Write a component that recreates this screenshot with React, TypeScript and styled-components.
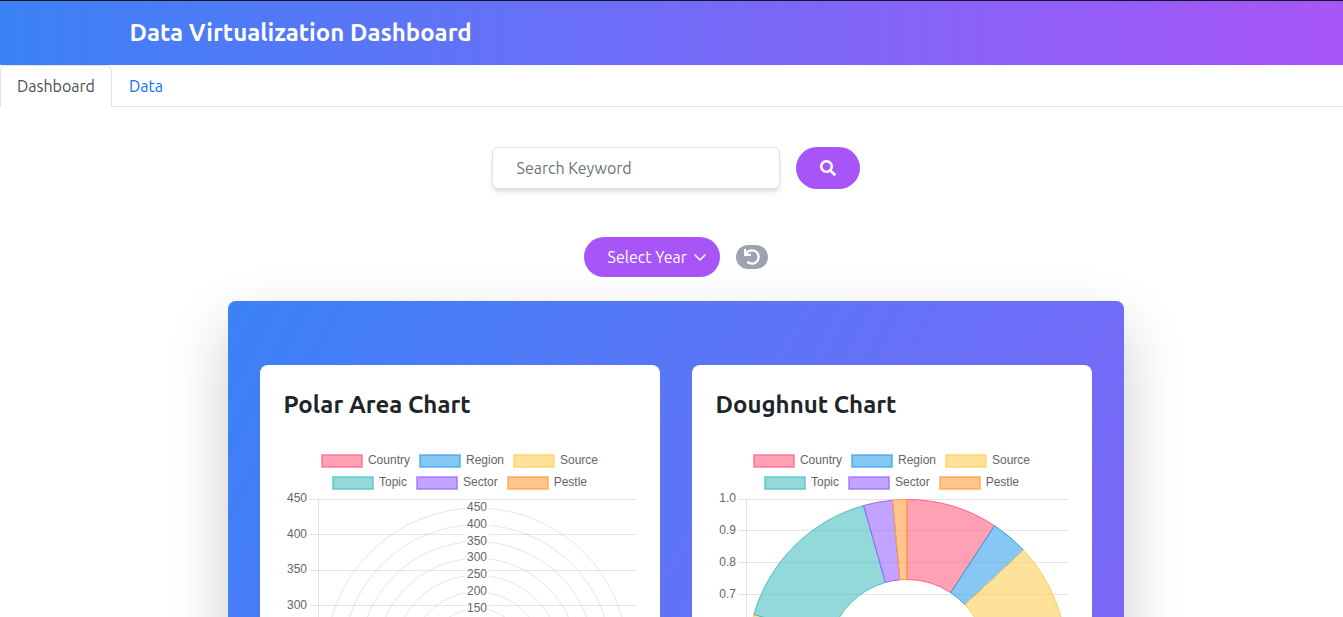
import React from "react";
import styled, { createGlobalStyle } from "styled-components";
import { FaSearch, FaUndo } from "react-icons/fa";

const GlobalStyle = createGlobalStyle`
  *, *::before, *::after { box-sizing: border-box; }
  html { scrollbar-width: none; }
  body {
    margin: 0;
    background: #fff;
    color: #212529;
    font-family: Ubuntu, "Open Sans", sans-serif;
    font-size: 16px;
    line-height: 24px;
  }
  button, input, select { font: inherit; }
`;

const Header = styled.header`
  border-top: 1px solid #14161c;
  background: linear-gradient(to right, #3b82f6, #a855f7);
`;

const HeaderInner = styled.div`
  max-width: 1140px;
  margin: 0 auto;
  padding: 16px 28px;
`;

const PageTitle = styled.h1`
  margin: 0;
  color: #fff;
  font-size: 24px;
  line-height: 32px;
  font-weight: 600;
`;

const Tabs = styled.nav`
  display: flex;
  border-bottom: 1px solid #dee2e6;
`;

const Tab = styled.a<{ $active?: boolean }>`
  margin-bottom: -1px;
  padding: 8px 16px;
  border: 1px solid;
  border-color: ${(p) => (p.$active ? "#dee2e6 #dee2e6 #fff" : "transparent")};
  border-radius: 6px 6px 0 0;
  color: ${(p) => (p.$active ? "#495057" : "#0d6efd")};
  text-decoration: none;
`;

const Main = styled.main`
  display: flex;
  flex-direction: column;
  align-items: center;
  padding: 40px 0 40px 8px;
`;

const SearchForm = styled.form`
  display: flex;
  gap: 16px;
  margin-bottom: 48px;
`;

const SearchInput = styled.input`
  width: 288px;
  height: 42px;
  padding: 8px 24px;
  border: 1px solid #dee2e6;
  border-radius: 6px;
  background: #fff;
  color: #212529;
  box-shadow: 0 4px 6px -1px rgba(0, 0, 0, 0.1), 0 2px 4px -2px rgba(0, 0, 0, 0.1);
  &::placeholder { color: #6c757d; opacity: 1; }
`;

const SearchButton = styled.button`
  display: flex;
  align-items: center;
  justify-content: center;
  width: 64px;
  height: 42px;
  padding: 0;
  border: 0;
  border-radius: 21px;
  background: #a855f7;
  color: #fff;
`;

const Filters = styled.div`
  display: flex;
  align-items: center;
  gap: 16px;
  margin-bottom: 24px;
`;

const SelectWrap = styled.div`
  position: relative;
  display: flex;
`;

const YearSelect = styled.select`
  appearance: none;
  width: 136px;
  height: 40px;
  padding: 0 32px 0 24px;
  border: 0;
  border-radius: 20px;
  background: #a855f7;
  color: #fff;
`;

const Chevron = styled.svg`
  position: absolute;
  right: 14px;
  top: 14px;
  pointer-events: none;
`;

const ResetButton = styled.button`
  display: flex;
  align-items: center;
  justify-content: center;
  width: 32px;
  height: 24px;
  padding: 0;
  border: 0;
  border-radius: 12px;
  background: #9ca3af;
  color: #fff;
`;

const Panel = styled.section`
  display: grid;
  grid-template-columns: repeat(2, minmax(0, 1fr));
  gap: 32px;
  width: 100%;
  max-width: 896px;
  padding: 64px 32px;
  border-radius: 8px;
  background: linear-gradient(118deg, #3b82f6, #a855f7 1585px);
  box-shadow: 0 25px 60px rgba(0, 0, 0, 0.2);
`;

const Card = styled.article`
  padding: 24px;
  border-radius: 8px;
  background: #fff;
`;

const CardTitle = styled.h2`
  margin: 0 0 32px;
  font-size: 24px;
  line-height: 32px;
  font-weight: 600;
`;

const Legend = styled.ul`
  display: flex;
  flex-wrap: wrap;
  justify-content: center;
  gap: 7px 9px;
  margin: 0;
  padding: 0;
  list-style: none;
  color: #666;
  font: 12px/14px "Liberation Sans", Arial, sans-serif;
`;

const LegendItem = styled.li`
  display: flex;
  gap: 5px;
`;

const Swatch = styled.span<{ $rgb: string }>`
  width: 42px;
  height: 14px;
  margin-top: 1px;
  border: 1px solid rgba(${(p) => p.$rgb}, 0.6);
  background: rgba(${(p) => p.$rgb}, 0.6) padding-box;
  box-shadow: inset 0 0 0 1px rgba(${(p) => p.$rgb}, 0.6);
`;

const Plot = styled.svg`
  display: block;
  width: 100%;
  height: auto;
  font: 12px "Liberation Sans", Arial, sans-serif;
`;

const SERIES = [
  { name: "Country", rgb: "255, 99, 132", from: 0, to: 33.3 },
  { name: "Region", rgb: "54, 162, 235", from: 33.3, to: 46.9 },
  { name: "Source", rgb: "255, 206, 86", from: 46.9, to: 286.2 },
  { name: "Topic", rgb: "75, 192, 192", from: 286.2, to: 344.2 },
  { name: "Sector", rgb: "153, 102, 255", from: 344.2, to: 354.8 },
  { name: "Pestle", rgb: "255, 159, 64", from: 354.8, to: 360 },
];

const GRID = "rgba(0, 0, 0, 0.1)";

function ChartLegend() {
  return (
    <Legend>
      {SERIES.map((s) => (
        <LegendItem key={s.name}>
          <Swatch $rgb={s.rgb} />
          {s.name}
        </LegendItem>
      ))}
    </Legend>
  );
}

function Axis({ labels, x, labelEnd }: { labels: string[]; x: number; labelEnd: number }) {
  const step = 319.5 / (labels.length - 1);
  const labelStep = 319 / (labels.length - 1);
  return (
    <g>
      {labels.map((label, i) => {
        const y = Math.floor(9 + step * i) + 0.5;
        return (
          <g key={label}>
            <line x1={x - 8} x2={352} y1={y} y2={y} stroke={GRID} />
            <text x={labelEnd} y={Math.floor(12.7 + labelStep * i)} textAnchor="end" fill="#666">{label}</text>
          </g>
        );
      })}
      <line x1={x + 0.5} x2={x + 0.5} y1={9} y2={329} stroke={GRID} />
    </g>
  );
}

const POLAR_TICKS = [50, 100, 150, 200, 250, 300, 350, 400, 450];

function PolarPlot() {
  const cx = 193;
  const cy = 169;
  return (
    <Plot viewBox="0 0 352 350" role="img" aria-label="Polar area chart">
      <Axis x={34} labelEnd={23} labels={["450", "400", "350", "300", "250", "200", "150", "100", "50", "0"]} />
      {POLAR_TICKS.map((t) => (
        <circle key={t} cx={cx} cy={cy} r={(t / 450) * 151} fill="none" stroke={GRID} />
      ))}
      {POLAR_TICKS.map((t) => {
        const y = cy - (t / 450) * 151;
        return (
          <g key={t}>
            <rect x={cx - 12} y={y - 8} width={24} height={16} fill="#fff" fillOpacity={0.75} />
            <text x={cx} y={Math.round(y + 3)} textAnchor="middle" fill="#666">{t}</text>
          </g>
        );
      })}
    </Plot>
  );
}

function slice(cx: number, cy: number, outer: number, inner: number, from: number, to: number) {
  const at = (r: number, deg: number) => {
    const a = (deg * Math.PI) / 180;
    return `${cx + r * Math.sin(a)} ${cy - r * Math.cos(a)}`;
  };
  const large = to - from > 180 ? 1 : 0;
  return `M${at(outer, from)} A${outer} ${outer} 0 ${large} 1 ${at(outer, to)} L${at(inner, to)} A${inner} ${inner} 0 ${large} 0 ${at(inner, from)} Z`;
}

function DoughnutPlot() {
  return (
    <Plot viewBox="0 0 352 350" role="img" aria-label="Doughnut chart">
      <Axis x={30} labelEnd={20} labels={["1.0", "0.9", "0.8", "0.7", "0.6", "0.5", "0.4", "0.3", "0.2", "0.1", "0"]} />
      {SERIES.map((s) => (
        <path
          key={s.name}
          d={slice(191, 169, 159.5, 79.5, s.from, s.to)}
          fill={`rgba(${s.rgb}, 0.6)`}
          stroke={`rgb(${s.rgb})`}
        />
      ))}
    </Plot>
  );
}

export default function App() {
  return (
    <>
      <GlobalStyle />
      <Header>
        <HeaderInner>
          <PageTitle>Data Virtualization Dashboard</PageTitle>
        </HeaderInner>
      </Header>
      <Tabs>
        <Tab href="#dashboard" $active aria-current="page">Dashboard</Tab>
        <Tab href="#data">Data</Tab>
      </Tabs>
      <Main>
        <SearchForm onSubmit={(e) => e.preventDefault()}>
          <SearchInput type="text" aria-label="Search Keyword" placeholder="Search Keyword" />
          <SearchButton type="submit" aria-label="Search">
            <FaSearch size={16} />
          </SearchButton>
        </SearchForm>
        <Filters>
          <SelectWrap>
            <YearSelect aria-label="Select Year" defaultValue="">
              <option value="">Select Year</option>
            </YearSelect>
            <Chevron width="12" height="12" viewBox="0 0 12 12" fill="none" stroke="#fff" strokeWidth="1.5" strokeLinecap="round" strokeLinejoin="round">
              <path d="M1 4l5 5 5-5" />
            </Chevron>
          </SelectWrap>
          <ResetButton type="button" aria-label="Reset filters">
            <FaUndo size={16} />
          </ResetButton>
        </Filters>
        <Panel>
          <Card>
            <CardTitle>Polar Area Chart</CardTitle>
            <ChartLegend />
            <PolarPlot />
          </Card>
          <Card>
            <CardTitle>Doughnut Chart</CardTitle>
            <ChartLegend />
            <DoughnutPlot />
          </Card>
        </Panel>
      </Main>
    </>
  );
}
